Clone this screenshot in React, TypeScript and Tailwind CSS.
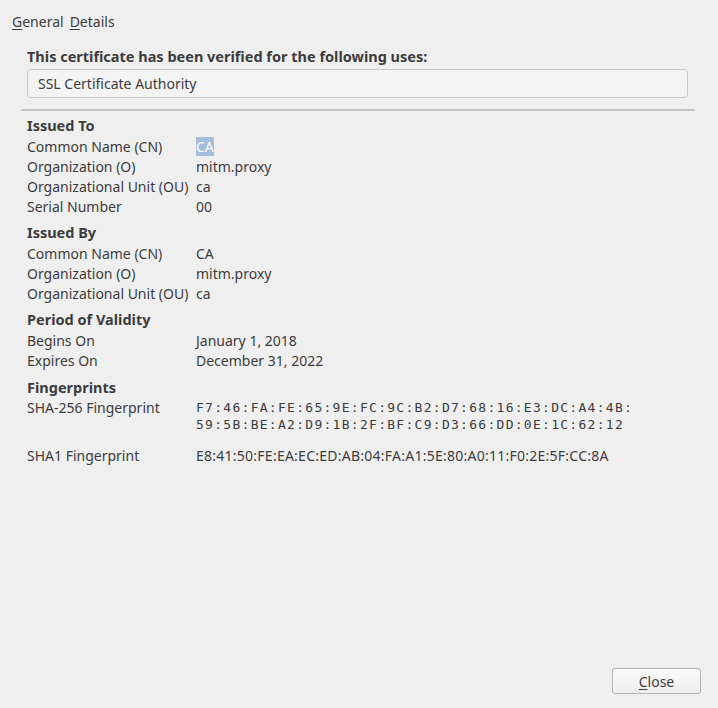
import React from 'react';

const font = { fontFamily: '"Noto Sans", "DejaVu Sans", sans-serif' };

type Row = { label: string; value: React.ReactNode };

const sections: { title: string; rows: Row[]; gap: string }[] = [
  {
    title: 'Issued To',
    gap: 'mb-[7px]',
    rows: [
      { label: 'Common Name (CN)', value: <span className="bg-[#a3bedc] text-white">CA</span> },
      { label: 'Organization (O)', value: 'mitm.proxy' },
      { label: 'Organizational Unit (OU)', value: 'ca' },
      { label: 'Serial Number', value: '00' },
    ],
  },
  {
    title: 'Issued By',
    gap: 'mb-[7px]',
    rows: [
      { label: 'Common Name (CN)', value: 'CA' },
      { label: 'Organization (O)', value: 'mitm.proxy' },
      { label: 'Organizational Unit (OU)', value: 'ca' },
    ],
  },
  {
    title: 'Period of Validity',
    gap: 'mb-[8px]',
    rows: [
      { label: 'Begins On', value: 'January 1, 2018' },
      { label: 'Expires On', value: 'December 31, 2022' },
    ],
  },
];

function InfoRow({ label, value }: Row) {
  return (
    <div className="flex h-5 items-center">
      <div className="w-[169px] shrink-0 whitespace-nowrap">{label}</div>
      <div className="whitespace-nowrap">{value}</div>
    </div>
  );
}

export default function App() {
  return (
    <div
      className="relative h-[708px] w-[718px] overflow-hidden bg-[#efefef] text-[14px] text-[#3c3c3c]"
      style={font}
    >
      {/* Tabs */}
      <div className="flex gap-[6px] pl-3 pt-[12px] leading-5">
        <span>
          <span className="underline underline-offset-2">G</span>eneral
        </span>
        <span>
          <span className="underline underline-offset-2">D</span>etails
        </span>
      </div>

      <div className="pl-[21px] pr-[23px] pt-[14px]">
        <div className="pl-[6px]">
          <div className="h-5 text-[14.5px] font-bold leading-5">
            This certificate has been verified for the following uses:
          </div>
          <div className="mt-[3px] mr-[7px] flex h-[29px] items-center rounded-[4px] border border-[#c9c9c9] bg-[#f4f4f4] pl-[10px]">
            SSL Certificate Authority
          </div>
        </div>
        <div className="mt-[11px] h-[2px] bg-[#c6c6c6]" />

        <div className="pl-[6px] pt-[5px]">
          {sections.map((s) => (
            <div key={s.title} className={s.gap}>
              <div className="flex h-5 items-center text-[14.5px] font-bold">{s.title}</div>
              {s.rows.map((r) => (
                <InfoRow key={r.label} {...r} />
              ))}
            </div>
          ))}

          <div>
            <div className="flex h-5 items-center text-[14.5px] font-bold">Fingerprints</div>
            <div className="flex pt-[1px]">
              <div className="w-[169px] shrink-0 leading-[17px]">SHA-256 Fingerprint</div>
              <div
                className="text-[13px] leading-[17px] tracking-[1.28px]"
                style={{ fontFamily: '"DejaVu Sans Mono", monospace' }}
              >
                <div>F7:46:FA:FE:65:9E:FC:9C:B2:D7:68:16:E3:DC:A4:4B:</div>
                <div>59:5B:BE:A2:D9:1B:2F:BF:C9:D3:66:DD:0E:1C:62:12</div>
              </div>
            </div>
            <div className="mt-[12px] flex h-5 items-center">
              <div className="w-[169px] shrink-0">SHA1 Fingerprint</div>
              <div className="whitespace-nowrap tracking-[0.25px]">
                E8:41:50:FE:EA:EC:ED:AB:04:FA:A1:5E:80:A0:11:F0:2E:5F:CC:8A
              </div>
            </div>
          </div>
        </div>
      </div>

      <button className="absolute left-[612px] top-[668px] h-[26px] w-[89px] rounded-[3px] border border-[#b3b3b3] bg-gradient-to-b from-[#fbfbfb] to-[#eeeeee] text-[#3c3c3c]">
        <span className="underline underline-offset-2">C</span>lose
      </button>
    </div>
  );
}
